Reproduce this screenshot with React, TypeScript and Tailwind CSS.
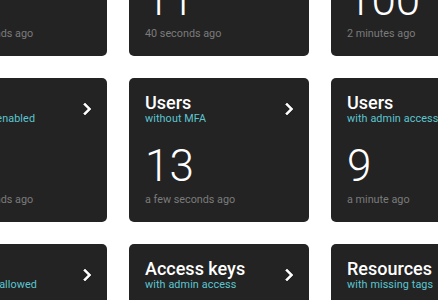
import React from "react";

type Card = { title: string; sub: string; value: string; time: string };

const cards: Card[] = [
  { title: "Roles", sub: "with policies attached", value: "24", time: "a few seconds ago" },
  { title: "Users", sub: "total", value: "11", time: "40 seconds ago" },
  { title: "Policies", sub: "customer managed", value: "100", time: "2 minutes ago" },
  { title: "Users", sub: "with vMFA enabled", value: "2", time: "a few seconds ago" },
  { title: "Users", sub: "without MFA", value: "13", time: "a few seconds ago" },
  { title: "Users", sub: "with admin access", value: "9", time: "a minute ago" },
  { title: "Rules", sub: "with any IP allowed", value: "4", time: "a minute ago" },
  { title: "Access keys", sub: "with admin access", value: "3", time: "a minute ago" },
  { title: "Resources", sub: "with missing tags", value: "57", time: "a minute ago" },
];

function Chevron() {
  return (
    <svg width="24" height="24" viewBox="0 0 24 24" className="-mr-2 mt-[3px] shrink-0" fill="#ffffff">
      <path d="M10 6 8.59 7.41 13.17 12l-4.58 4.59L10 18l6-6z" stroke="#ffffff" strokeWidth="0.6" />
    </svg>
  );
}

export default function App() {
  return (
    <div className="w-[438px] h-[300px] overflow-hidden bg-white" style={{ fontFamily: "Roboto, 'Liberation Sans', sans-serif" }}>
      <div className="grid grid-cols-[repeat(3,180px)] auto-rows-[144px] gap-[22px] -ml-[73px] -mt-[88px]">
        {cards.map((c, i) => (
          <div key={i} className="bg-[#232323] rounded-[5px] p-4 flex flex-col">
            <div className="flex justify-between items-start">
              <div className="flex flex-col whitespace-nowrap">
                <div className="text-[18px] leading-[18px] font-medium text-white">{c.title}</div>
                <div className="text-[10.8px] leading-[14px] text-[#5cc6d0] tracking-[0.1px]">{c.sub}</div>
              </div>
              {i % 3 !== 2 && <Chevron />}
            </div>
            <div className="mt-[18px] text-[44px] leading-[44px] font-light text-white">{c.value}</div>
            <div className="mt-[5px] text-[10.8px] leading-[14px] text-[#7b7b7b] whitespace-nowrap">{c.time}</div>
          </div>
        ))}
      </div>
    </div>
  );
}
